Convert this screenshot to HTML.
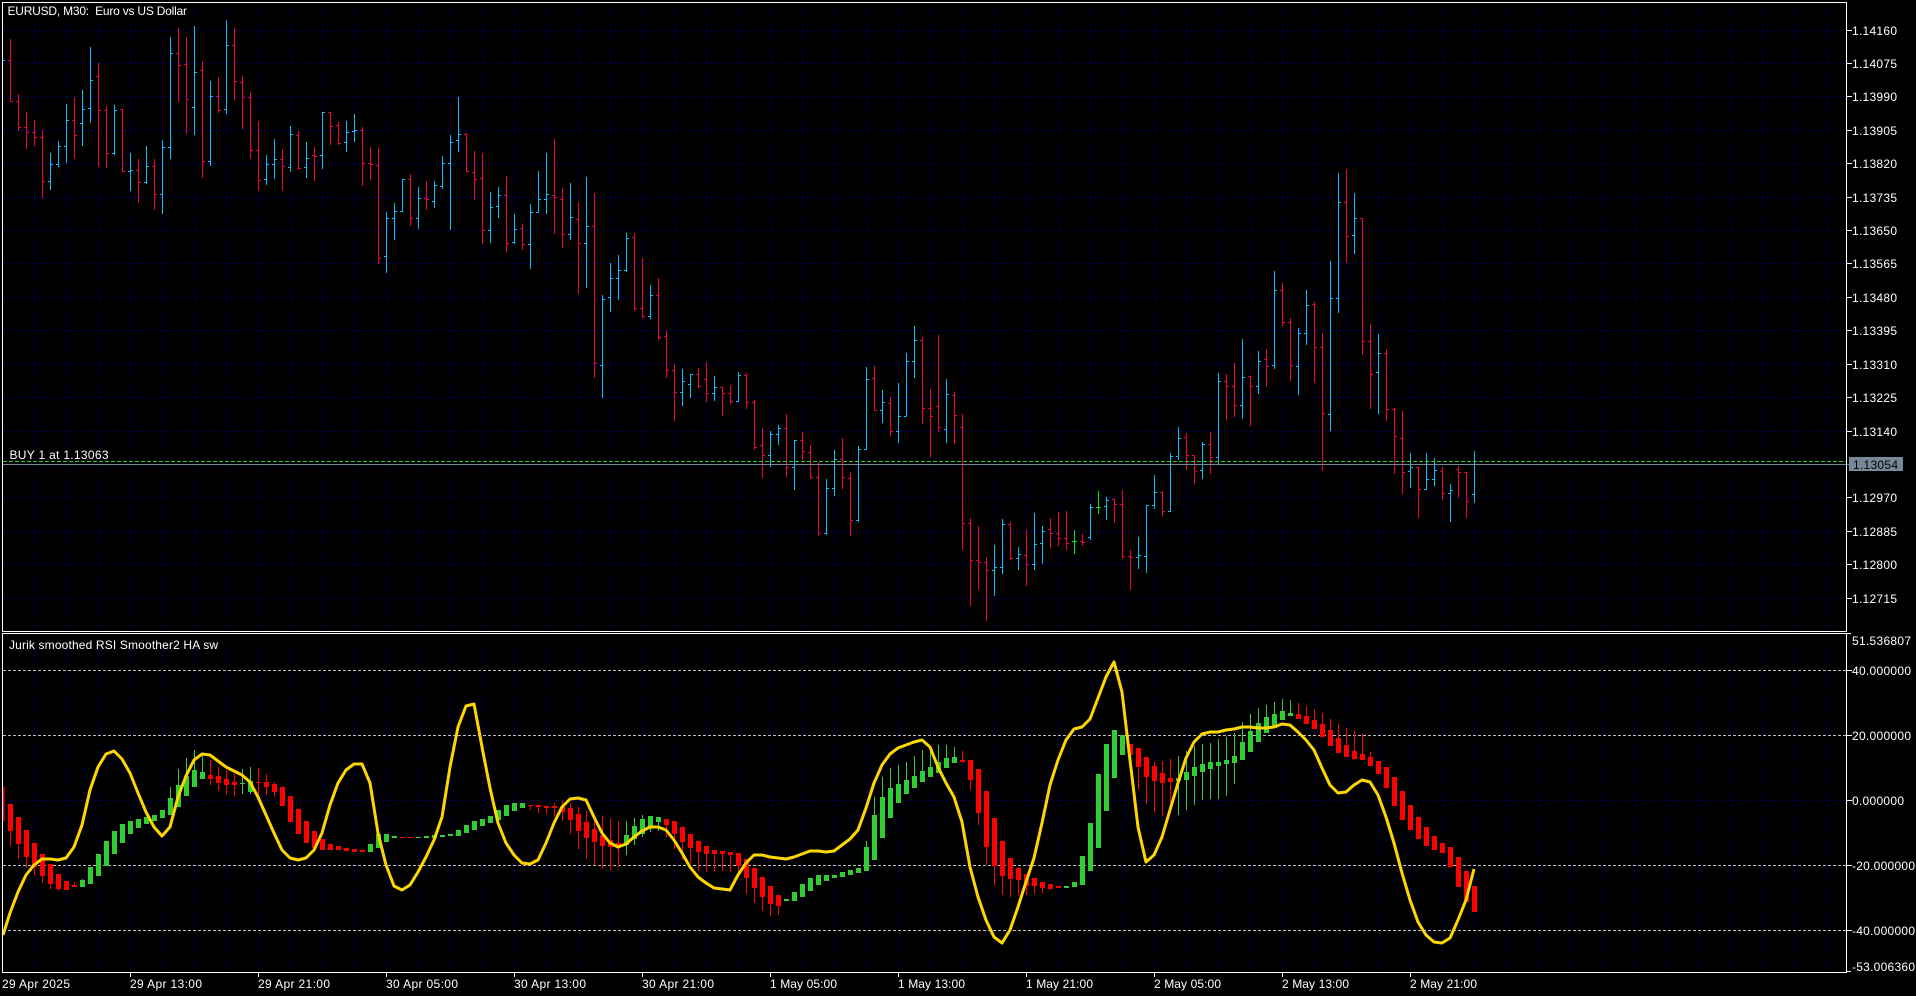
<!DOCTYPE html>
<html lang="en">
<head>
<meta charset="utf-8">
<title>EURUSD, M30</title>
<style>
html,body{margin:0;padding:0;background:#000;width:1916px;height:996px;overflow:hidden}
svg{display:block}
text{font-family:"Liberation Sans",sans-serif;font-size:12px;fill:#fff;white-space:pre}
</style>
</head>
<body>
<svg xmlns="http://www.w3.org/2000/svg" width="1916" height="996" viewBox="0 0 1916 996">
<defs>
<pattern id="vg" patternUnits="userSpaceOnUse" x="34" y="0" width="32" height="6"><rect x="0" y="0" width="1" height="3" fill="#000058"/></pattern>
</defs>
<rect width="1916" height="996" fill="#000"/>
<!-- grid -->
<rect x="3" y="3" width="1843" height="628" fill="url(#vg)"/>
<rect x="3" y="634" width="1843" height="338" fill="url(#vg)"/>
<path shape-rendering="crispEdges" d="M3 30.5H1846M3 63.5H1846M3 96.5H1846M3 130.5H1846M3 163.5H1846M3 197.5H1846M3 230.5H1846M3 263.5H1846M3 297.5H1846M3 330.5H1846M3 364.5H1846M3 397.5H1846M3 431.5H1846M3 497.5H1846M3 531.5H1846M3 564.5H1846M3 598.5H1846M3 800.5H1846" stroke="#000058" stroke-dasharray="3 3" fill="none"/>
<!-- OHLC bars -->
<g transform="translate(.5 .5)" fill="none" stroke-linecap="square" shape-rendering="crispEdges">
<path stroke="#00bfff" d="M3 60h1M50 153V189M48 181h1M51 164h1M58 141V166M56 164h1M59 146h1M66 104V162M64 146h1M67 120h1M82 90V145M80 123h1M83 109h1M90 47V122M88 108h1M91 80h1M114 105V154M112 153h1M115 110h1M130 153V190M128 171h1M131 170h1M146 146V183M144 182h1M147 166h1M162 140V213M160 194h1M163 147h1M170 37V158M168 147h1M171 53h1M194 26V134M192 107h1M195 72h1M210 81V165M208 161h1M211 96h1M226 20V113M224 109h1M227 45h1M266 155V184M264 179h1M267 164h1M274 139V178M272 164h1M275 159h1M290 126V171M288 167h1M291 134h1M306 142V177M304 167h1M307 158h1M322 112V168M320 155h1M323 112h1M346 121V151M344 142h1M347 132h1M354 114V141M352 131h1M355 130h1M386 212V272M384 256h1M387 218h1M394 203V239M392 218h1M395 211h1M402 179V211M400 211h1M403 179h1M418 187V228M416 218h1M419 198h1M434 181V207M432 201h1M435 185h1M442 156V188M440 186h1M443 163h1M450 135V229M448 163h1M451 142h1M458 97V151M456 140h1M459 134h1M490 192V242M488 230h1M491 207h1M498 187V217M496 206h1M499 195h1M514 214V243M512 242h1M515 229h1M530 204V268M528 244h1M531 212h1M538 171V212M536 212h1M539 199h1M546 153V213M544 199h1M547 194h1M570 183V239M568 234h1M571 217h1M586 177V287M584 243h1M587 226h1M602 295V397M600 365h1M603 299h1M610 263V311M608 297h1M611 278h1M618 255V299M616 278h1M619 270h1M626 233V271M624 270h1M627 238h1M650 285V318M648 316h1M651 295h1M682 369V405M680 392h1M683 381h1M690 374V397M688 384h1M691 374h1M714 376V400M712 393h1M715 387h1M738 372V401M736 401h1M739 375h1M770 431V466M768 455h1M771 434h1M778 425V444M776 434h1M779 428h1M794 440V489M792 467h1M795 440h1M826 479V534M824 533h1M827 488h1M834 450V495M832 488h1M835 459h1M858 446V521M856 520h1M859 449h1M866 367V449M864 449h1M867 379h1M882 390V422M880 410h1M883 402h1M898 383V442M896 431h1M899 416h1M906 353V416M904 416h1M907 361h1M914 326V377M912 361h1M915 340h1M946 379V442M944 429h1M947 394h1M994 545V595M992 570h1M995 567h1M1002 519V573M1000 567h1M1003 524h1M1018 547V569M1016 558h1M1019 554h1M1034 513V569M1032 564h1M1035 544h1M1042 526V563M1040 543h1M1043 531h1M1090 504V539M1088 537h1M1091 507h1M1106 497V519M1104 506h1M1107 500h1M1138 537V568M1136 557h1M1139 555h1M1146 505V572M1144 556h1M1147 505h1M1154 475V508M1152 505h1M1155 492h1M1170 453V511M1168 511h1M1171 456h1M1178 427V459M1176 456h1M1179 438h1M1202 442V478M1200 470h1M1203 444h1M1218 373V464M1216 457h1M1219 381h1M1242 339V418M1240 405h1M1243 377h1M1258 351V393M1256 386h1M1259 361h1M1274 271V368M1272 365h1M1275 290h1M1298 328V394M1296 366h1M1299 333h1M1306 290V344M1304 333h1M1307 305h1M1330 261V430M1328 414h1M1331 298h1M1338 173V312M1336 298h1M1339 202h1M1354 193V253M1352 235h1M1355 218h1M1378 334V413M1376 372h1M1379 353h1M1410 453V487M1408 471h1M1411 467h1M1426 453V489M1424 489h1M1427 479h1M1434 458V485M1432 479h1M1435 470h1M1450 484V521M1448 493h1M1451 490h1M1474 451V502M1472 494h1M1475 464h1"/>
<path stroke="#f5003c" d="M10 39V101M8 60h1M11 101h1M18 94V130M16 101h1M19 127h1M26 112V148M24 127h1M27 132h1M34 120V145M32 132h1M35 137h1M42 130V197M40 137h1M43 181h1M74 97V158M72 120h1M75 135h1M98 63V166M96 76h1M99 110h1M106 106V167M104 110h1M107 153h1M122 109V171M120 109h1M123 171h1M138 159V202M136 170h1M139 182h1M154 159V209M152 166h1M155 194h1M178 28V101M176 53h1M179 65h1M186 37V133M184 64h1M187 99h1M202 61V177M200 70h1M203 161h1M218 77V112M216 96h1M219 110h1M234 28V99M232 45h1M235 81h1M242 76V128M240 82h1M243 97h1M250 92V158M248 97h1M251 150h1M258 121V190M256 150h1M259 180h1M282 149V190M280 159h1M283 166h1M298 131V169M296 135h1M299 168h1M314 147V180M312 155h1M315 156h1M330 112V144M328 112h1M331 126h1M338 122V144M336 125h1M339 143h1M362 127V185M360 130h1M363 163h1M370 147V179M368 163h1M371 164h1M378 148V263M376 165h1M379 258h1M410 174V225M408 179h1M411 218h1M426 181V209M424 198h1M427 199h1M466 133V171M464 134h1M467 171h1M474 151V199M472 172h1M475 179h1M482 153V243M480 178h1M483 230h1M506 176V251M504 195h1M507 243h1M522 224V249M520 228h1M523 244h1M554 139V233M552 195h1M555 197h1M562 188V247M560 199h1M563 234h1M578 202V293M576 219h1M579 243h1M594 193V377M592 226h1M595 363h1M634 233V310M632 237h1M635 308h1M642 258V317M640 308h1M643 316h1M658 278V339M656 295h1M659 337h1M666 331V377M664 336h1M667 370h1M674 364V420M672 370h1M675 392h1M698 368V387M696 374h1M699 386h1M706 362V401M704 379h1M707 393h1M722 387V415M720 387h1M723 393h1M730 385V403M728 393h1M731 401h1M746 373V408M744 375h1M747 402h1M754 400V449M752 402h1M755 447h1M762 428V477M760 445h1M763 455h1M786 414V476M784 428h1M787 467h1M802 432V459M800 440h1M803 451h1M810 445V478M808 452h1M811 477h1M818 462V535M816 477h1M819 533h1M842 438V488M840 459h1M843 477h1M850 472V535M848 478h1M851 520h1M874 366V410M872 378h1M875 410h1M890 397V435M888 403h1M891 431h1M922 337V423M920 340h1M923 408h1M930 389V456M928 408h1M931 416h1M938 335V431M936 406h1M939 427h1M954 392V443M952 395h1M955 415h1M962 414V549M960 427h1M963 523h1M970 518V605M968 523h1M971 560h1M978 526V589M976 560h1M979 562h1M986 557V620M984 562h1M987 570h1M1010 522V559M1008 524h1M1011 558h1M1026 530V585M1024 555h1M1027 564h1M1050 518V547M1048 529h1M1051 533h1M1058 512V545M1056 533h1M1059 538h1M1066 511V549M1064 538h1M1067 543h1M1082 534V545M1080 541h1M1083 542h1M1114 499V522M1112 499h1M1115 504h1M1122 490V558M1120 504h1M1123 556h1M1130 550V589M1128 556h1M1131 557h1M1162 491V515M1160 492h1M1163 511h1M1186 433V469M1184 437h1M1187 455h1M1194 455V483M1192 455h1M1195 471h1M1210 432V473M1208 444h1M1211 457h1M1226 374V419M1224 381h1M1227 386h1M1234 363V416M1232 386h1M1235 405h1M1250 376V425M1248 376h1M1251 386h1M1266 349V386M1264 359h1M1267 366h1M1282 283V325M1280 290h1M1283 322h1M1290 318V380M1288 322h1M1291 365h1M1314 302V382M1312 304h1M1315 347h1M1322 333V470M1320 347h1M1323 413h1M1346 169V262M1344 202h1M1347 236h1M1362 218V354M1360 218h1M1363 341h1M1370 324V408M1368 341h1M1371 374h1M1386 349V420M1384 353h1M1387 409h1M1394 408V473M1392 409h1M1395 436h1M1402 411V493M1400 438h1M1403 472h1M1418 467V517M1416 467h1M1419 489h1M1442 467V499M1440 471h1M1443 493h1M1458 466V497M1456 469h1M1459 472h1M1466 472V517M1464 472h1M1467 501h1"/>
<path stroke="#00e600" d="M1074 530V553M1072 541h1M1075 541h1M1098 491V513M1096 507h1M1099 507h1"/>
</g>
<!-- price lines -->
<path shape-rendering="crispEdges" d="M3 461.5H1846" stroke="#32cd32" stroke-dasharray="4 2" fill="none"/>
<path shape-rendering="crispEdges" d="M3 464.5H1849" stroke="#778899" fill="none"/>
<!-- indicator level lines -->
<path shape-rendering="crispEdges" d="M3 670.5H1846M3 735.5H1846M3 865.5H1846M3 930.5H1846" stroke="#c0c0c0" stroke-dasharray="3 2" fill="none"/>
<!-- candle wicks -->
<g transform="translate(.5 0)" fill="none" shape-rendering="crispEdges">
<path stroke="#f00" d="M10 804V846M18 817V859M26 830V868M34 843V875M42 854V883M50 864V889M58 874V891M74 882V887M210 760V785M218 767V791M226 770V795M234 774V796M258 768V795M266 774V795M274 782V796M530 805V810M538 805V813M546 806V814M554 803V817M562 801V821M570 803V834M578 807V849M586 811V859M594 817V865M602 816V869M610 819V870M618 821V867M666 819V837M674 821V849M682 827V860M690 834V863M698 841V871M706 846V872M714 850V871M722 851V871M730 852V872M738 853V875M746 859V894M754 868V903M762 877V911M770 886V916M778 895V915M962 751V763M970 760V790M978 769V825M986 791V865M994 818V885M1002 841V895M1010 858V897M1018 868V896M1026 874V895M1034 878V894M1042 882V893M1138 748V789M1146 757V804M1154 762V812M1162 761V816M1170 759V805M1298 703V719M1306 706V724M1314 709V729M1322 713V737M1330 719V746M1338 724V753M1346 728V757M1354 731V759M1362 734V760M1370 752V766"/>
<path stroke="#32cd32" d="M82 879V887M170 787V815M178 769V807M186 758V796M194 750V787M202 753V779M242 769V794M250 767V794M626 821V855M634 818V845M642 815V837M650 816V832M658 817V831M866 841V871M874 797V860M882 777V838M890 768V818M898 765V803M906 762V794M914 756V788M922 750V782M930 750V777M938 745V773M946 745V768M954 747V763M1178 756V815M1186 751V810M1194 746V805M1202 744V800M1210 743V799M1218 739V799M1226 737V796M1234 733V784M1242 722V760M1250 714V752M1258 708V742M1266 705V733M1274 702V728M1282 699V720M1290 700V716"/>
</g>
<!-- candle bodies -->
<g transform="translate(.5 0)" fill="none" stroke-width="5" shape-rendering="crispEdges">
<path stroke="#f00" d="M10 804V831M18 817V844M26 830V857M34 843V867M42 854V876M50 864V884M58 874V889M66 881V890M74 885V887M210 775V779M218 776V783M226 779V785M234 782V785M258 782V783M266 782V787M274 784V792M282 787V806M290 796V822M298 809V834M306 821V843M314 831V848M322 839V850M330 844V850M338 846V850M346 848V851M354 849V852M362 850V852M402 837V838M410 837V838M530 805V806M538 805V807M546 806V808M554 806V808M562 807V812M570 808V820M578 814V831M586 822V838M594 829V842M602 835V846M610 840V847M618 843V847M666 819V825M674 821V834M682 827V842M690 834V848M698 841V852M706 846V854M714 850V854M722 851V854M730 852V855M738 853V866M746 859V878M754 868V888M762 877V897M770 886V904M778 895V906M962 760V762M970 760V780M978 769V813M986 791V847M994 818V866M1002 841V876M1010 858V879M1018 868V880M1026 874V886M1034 878V886M1042 882V888M1050 884V889M1058 886V888M1130 744V755M1138 748V767M1146 757V777M1154 766V781M1162 773V783M1170 778V782M1298 714V719M1306 716V724M1314 720V729M1322 724V737M1330 730V746M1338 738V753M1346 745V757M1354 751V759M1362 754V760M1370 757V766M1378 761V774M1386 767V788M1394 777V806M1402 791V820M1410 805V830M1418 817V839M1426 827V846M1434 836V850M1442 843V853M1450 847V867M1458 857V887M1466 871V902M1474 886V912"/>
<path stroke="#32cd32" d="M82 880V887M90 867V884M98 854V876M106 841V866M114 831V854M122 824V843M130 821V834M138 819V828M146 817V824M154 815V821M162 810V818M170 798V815M178 785V807M186 776V796M194 770V787M202 772V779M242 783V784M250 781V792M370 844V852M378 834V848M386 834V842M394 836V838M418 837V838M426 836V838M434 835V838M442 835V837M450 834V836M458 830V836M466 825V833M474 821V830M482 819V826M490 816V823M498 810V820M506 805V816M514 803V811M522 803V808M626 835V845M634 826V839M642 819V834M650 816V827M658 817V822M786 899V901M794 892V901M802 884V897M810 878V891M818 875V885M826 875V881M834 875V878M842 872V877M850 870V875M858 868V873M866 847V871M874 815V860M882 797V838M890 788V818M898 784V803M906 780V794M914 776V788M922 771V782M930 767V777M938 762V773M946 758V768M954 757V763M1066 886V888M1074 882V887M1082 856V885M1090 823V871M1098 774V848M1106 744V811M1114 730V778M1122 735V755M1178 778V781M1186 772V780M1194 767V776M1202 764V772M1210 762V769M1218 762V766M1226 760V764M1234 756V763M1242 742V760M1250 731V752M1258 723V742M1266 717V733M1274 714V728M1282 711V720M1290 713V716"/>
<path stroke="#f00" stroke-width="2" d="M3 787V821"/>
</g>
<!-- indicator line -->
<polyline fill="none" stroke="#ffd700" stroke-width="3" stroke-linejoin="round" points="3,935 10,913 18,892 26,875 34,865 42,859 50,859 58,860 66,858 74,847 82,825 90,790 98,767 106,754 114,751 122,759 130,773 138,793 146,812 154,827 162,836 170,827 178,797 186,776 194,760 202,754 210,755 218,761 226,767 234,771 242,775 250,782 258,797 266,815 274,833 282,850 290,858 298,860 306,858 314,850 322,833 330,805 338,783 346,770 354,764 362,764 370,783 378,833 386,865 394,886 402,890 410,885 418,872 426,857 434,840 442,817 450,767 458,727 466,706 474,704 482,747 490,788 498,823 506,843 514,855 522,863 530,864 538,860 546,843 554,823 562,807 570,799 578,798 586,800 594,817 602,833 610,843 618,847 626,844 634,837 642,831 650,827 658,827 666,830 674,840 682,853 690,867 698,877 706,883 714,888 722,889 730,890 738,875 746,863 754,855 762,855 770,857 778,858 786,859 794,857 802,854 810,851 818,851 826,852 834,851 842,845 850,839 858,830 866,808 874,783 882,765 890,754 898,748 906,745 914,742 922,740 930,747 938,767 946,783 954,797 962,822 970,867 978,897 986,920 994,937 1002,943 1010,930 1018,907 1026,882 1034,858 1042,823 1050,785 1058,760 1066,740 1074,729 1082,727 1090,719 1098,698 1106,677 1114,662 1122,692 1130,760 1138,827 1146,862 1154,855 1162,837 1170,810 1178,783 1186,758 1194,742 1202,734 1210,732 1218,732 1226,730 1234,729 1242,727 1250,727 1258,728 1266,728 1274,727 1282,724 1290,725 1298,732 1306,740 1314,750 1322,768 1330,785 1338,793 1346,792 1354,785 1362,780 1370,782 1378,795 1386,817 1394,843 1402,873 1410,900 1418,922 1426,935 1434,942 1442,943 1450,938 1458,920 1466,900 1474,869"/>
<!-- frames and ticks -->
<path shape-rendering="crispEdges" fill="none" stroke="#fff" d="M2.5 2.5H1846.5V631.5H2.5ZM2.5 633.5H1846.5V972.5H2.5ZM1847 30.5h5M1847 63.5h5M1847 96.5h5M1847 130.5h5M1847 163.5h5M1847 197.5h5M1847 230.5h5M1847 263.5h5M1847 297.5h5M1847 330.5h5M1847 364.5h5M1847 397.5h5M1847 431.5h5M1847 497.5h5M1847 531.5h5M1847 564.5h5M1847 598.5h5M1847 633.5h4M1847 670.5h5M1847 735.5h5M1847 800.5h5M1847 865.5h5M1847 930.5h5M1847 971.5h4M130.5 973v4M258.5 973v4M386.5 973v4M514.5 973v4M642.5 973v4M770.5 973v4M898.5 973v4M1026.5 973v4M1154.5 973v4M1282.5 973v4M1410.5 973v4"/>
<!-- chart labels -->
<text x="7.5" y="15" textLength="179.5">EURUSD, M30:  Euro vs US Dollar</text>
<text x="9.5" y="459" textLength="99">BUY 1 at 1.13063</text>
<text x="9" y="649" textLength="209">Jurik smoothed RSI Smoother2 HA sw</text>
<!-- price scale -->
<text x="1852" y="35" textLength="45">1.14160</text>
<text x="1852" y="68" textLength="45">1.14075</text>
<text x="1852" y="101" textLength="45">1.13990</text>
<text x="1852" y="135" textLength="45">1.13905</text>
<text x="1852" y="168" textLength="45">1.13820</text>
<text x="1852" y="202" textLength="45">1.13735</text>
<text x="1852" y="235" textLength="45">1.13650</text>
<text x="1852" y="268" textLength="45">1.13565</text>
<text x="1852" y="302" textLength="45">1.13480</text>
<text x="1852" y="335" textLength="45">1.13395</text>
<text x="1852" y="369" textLength="45">1.13310</text>
<text x="1852" y="402" textLength="45">1.13225</text>
<text x="1852" y="436" textLength="45">1.13140</text>
<rect x="1849" y="457" width="54" height="14" fill="#778899"/>
<text x="1853" y="469" textLength="45" style="fill:#000">1.13054</text>
<text x="1852" y="502" textLength="45">1.12970</text>
<text x="1852" y="536" textLength="45">1.12885</text>
<text x="1852" y="569" textLength="45">1.12800</text>
<text x="1852" y="603" textLength="45">1.12715</text>
<!-- indicator scale -->
<text x="1852" y="645" textLength="59">51.536807</text>
<text x="1852" y="675" textLength="59">40.000000</text>
<text x="1852" y="740" textLength="59">20.000000</text>
<text x="1852" y="805" textLength="52">0.000000</text>
<text x="1852" y="870" textLength="63">-20.000000</text>
<text x="1852" y="935" textLength="63">-40.000000</text>
<text x="1852" y="971" textLength="63">-53.006360</text>
<!-- time scale -->
<text x="2" y="988" textLength="68">29 Apr 2025</text>
<text x="130" y="988" textLength="72">29 Apr 13:00</text>
<text x="258" y="988" textLength="72">29 Apr 21:00</text>
<text x="386" y="988" textLength="72">30 Apr 05:00</text>
<text x="514" y="988" textLength="72">30 Apr 13:00</text>
<text x="642" y="988" textLength="72">30 Apr 21:00</text>
<text x="770" y="988" textLength="67">1 May 05:00</text>
<text x="898" y="988" textLength="67">1 May 13:00</text>
<text x="1026" y="988" textLength="67">1 May 21:00</text>
<text x="1154" y="988" textLength="67">2 May 05:00</text>
<text x="1282" y="988" textLength="67">2 May 13:00</text>
<text x="1410" y="988" textLength="67">2 May 21:00</text>
</svg>
</body>
</html>
